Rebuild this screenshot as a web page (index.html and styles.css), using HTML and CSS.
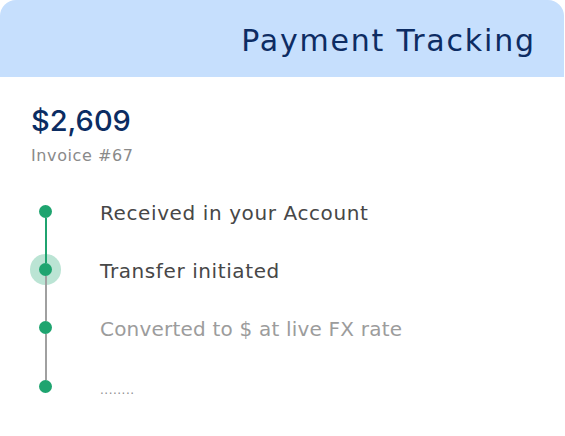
FILE: index.html
```html
<!DOCTYPE html>
<html>
<head>
<meta charset="utf-8">
<link rel="stylesheet" href="styles.css">
</head>
<body>
<div class="card">
  <header class="card-header">
    <h1 class="title">Payment Tracking</h1>
  </header>
  <section class="summary">
    <div class="amount">$2,609</div>
    <div class="invoice">Invoice #67</div>
  </section>
  <ol class="timeline">
    <li class="step step-done">
      <span class="marker"><span class="seg seg-none"></span><span class="dot"></span><span class="seg seg-green"></span></span>
      <span class="label">Received in your Account</span>
    </li>
    <li class="step step-current">
      <span class="marker"><span class="seg seg-green"></span><span class="dot dot-halo"></span><span class="seg seg-gray"></span></span>
      <span class="label">Transfer initiated</span>
    </li>
    <li class="step step-pending">
      <span class="marker"><span class="seg seg-gray"></span><span class="dot"></span><span class="seg seg-gray"></span></span>
      <span class="label muted">Converted to $ at live FX rate</span>
    </li>
    <li class="step step-pending">
      <span class="marker"><span class="seg seg-gray"></span><span class="dot"></span><span class="seg seg-none"></span></span>
      <span class="label dots">........</span>
    </li>
  </ol>
</div>
</body>
</html>
```
FILE: styles.css
```css
html, body {
  margin: 0;
  padding: 0;
  background: #ffffff;
}
body {
  width: 565px;
  height: 436px;
  overflow: hidden;
  font-family: "DejaVu Sans", "Open Sans", sans-serif;
}
.card {
  width: 564px;
}
.card-header {
  height: 77px;
  background: #c6dffd;
  border-radius: 16px 16px 0 0;
  display: flex;
  justify-content: flex-end;
  align-items: flex-start;
  padding-right: 30px;
}
.title {
  margin: 0;
  padding-top: 21px;
  font-size: 30px;
  line-height: 40px;
  letter-spacing: 1.8px;
  margin-right: -1.8px;
  font-weight: normal;
  color: #0d2c63;
}
.summary {
  padding: 27px 0 0 31px;
}
.amount {
  font-family: "Inter", sans-serif;
  font-size: 29px;
  line-height: 34px;
  font-weight: 500;
  color: #0b2c62;
}
.invoice {
  font-size: 16px;
  line-height: 20px;
  letter-spacing: 0.6px;
  margin-top: 8px;
  color: #8a8a8a;
}
.timeline {
  list-style: none;
  margin: 16px 0 0 0;
  padding: 0 0 0 31px;
}
.step {
  height: 58.3px;
  display: flex;
  align-items: center;
  gap: 40px;
}
.marker {
  width: 29px;
  height: 100%;
  display: flex;
  flex-direction: column;
  align-items: center;
}
.seg {
  flex: 1;
  width: 2px;
}
.seg-green { background: #1fa36f; }
.seg-gray { background: #a0a0a0; }
.seg-none { background: transparent; }
.dot {
  width: 13px;
  height: 13px;
  border-radius: 50%;
  background: #1ea46f;
  flex: none;
}
.dot-halo {
  box-shadow: 0 0 0 9px rgba(30, 164, 111, 0.3);
}
.label {
  font-size: 20px;
  letter-spacing: 0.6px;
  padding-top: 3px;
  color: #474747;
}
.label.muted {
  letter-spacing: 0.2px;
  color: #9c9c9c;
}
.label.dots {
  font-size: 12px;
  letter-spacing: 0.5px;
  color: #8f8f8f;
  padding-top: 8px;
}
```
